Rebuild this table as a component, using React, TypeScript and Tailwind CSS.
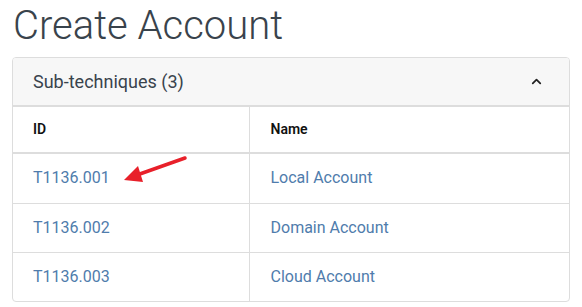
import { ChevronUp } from "lucide-react";

const rows = [
  { id: "T1136.001", name: "Local Account" },
  { id: "T1136.002", name: "Domain Account" },
  { id: "T1136.003", name: "Cloud Account" },
];

export default function App() {
  return (
    <div className="w-[582px] h-[307px] bg-white px-3 font-['Roboto',sans-serif] text-[#39434c]">
      <h1 className="text-[40px] font-light leading-[51px] ml-[1px]">Create Account</h1>
      <div className="relative mt-[6px] w-[558px] rounded border border-[#dddddd] overflow-hidden">
        <div className="flex h-[49px] items-center justify-between bg-[#f7f7f7] pl-5 pr-[25px] border-b-2 border-[#dddddd]">
          <span className="text-[18px]">Sub-techniques (3)</span>
          <ChevronUp className="w-[15px] h-[15px] text-[#222]" strokeWidth={2.8} />
        </div>
        <table className="w-full border-collapse text-left">
          <thead>
            <tr className="h-[46px] border-b-2 border-[#dddddd]">
              <th className="w-[236px] pl-5 text-[14px] font-semibold text-[#111] border-r border-[#dddddd]">ID</th>
              <th className="pl-[21px] text-[14px] font-semibold text-[#111]">Name</th>
            </tr>
          </thead>
          <tbody>
            {rows.map((r, i) => (
              <tr key={r.id} className={i === 0 ? "h-[50px] border-b border-[#dddddd]" : i === 1 ? "h-[49px] border-b border-[#dddddd]" : "h-[49px]"}>
                <td className="pl-5 text-[16px] text-[#4f7cac] border-r border-[#dddddd]">{r.id}</td>
                <td className="pl-[21px] text-[16px] text-[#4f7cac]">{r.name}</td>
              </tr>
            ))}
          </tbody>
        </table>
        <svg className="absolute left-0 top-0 pointer-events-none" width="558" height="160" viewBox="0 0 558 160">
          <line x1="172" y1="100" x2="124" y2="117" stroke="#e8202a" strokeWidth="3.5" strokeLinecap="round" />
          <polygon points="111,122 125,108 130,124" fill="#e8202a" />
        </svg>
      </div>
    </div>
  );
}
